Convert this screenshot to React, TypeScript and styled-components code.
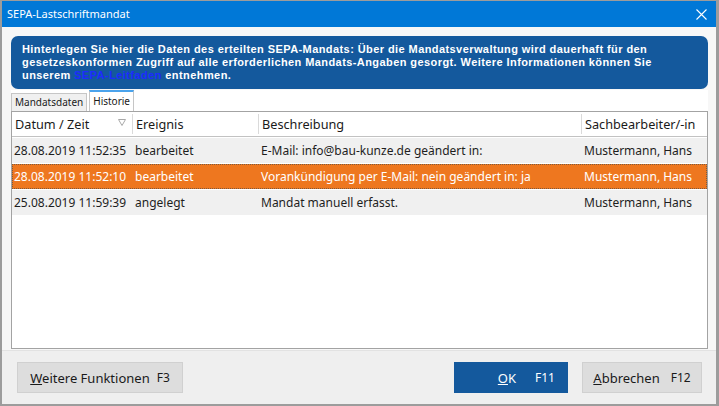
import React from "react";
import styled, { createGlobalStyle, css } from "styled-components";

interface IHistoryEntry {
    date: string;
    event: string;
    description: string;
    clerk: string;
}

const entries: IHistoryEntry[] = [
    {
        date: "28.08.2019 11:52:35",
        event: "bearbeitet",
        description: "E-Mail: info@bau-kunze.de geändert in:",
        clerk: "Mustermann, Hans",
    },
    {
        date: "28.08.2019 11:52:10",
        event: "bearbeitet",
        description: "Vorankündigung per E-Mail: nein geändert in: ja",
        clerk: "Mustermann, Hans",
    },
    {
        date: "25.08.2019 11:59:39",
        event: "angelegt",
        description: "Mandat manuell erfasst.",
        clerk: "Mustermann, Hans",
    },
];

const columns = ["Datum / Zeit", "Ereignis", "Beschreibung", "Sachbearbeiter/-in"];

const App: React.FC = () => {
    const selected = 1;
    return (
        <>
            <GlobalStyle />
            <Window>
                <TitleBar>
                    <Title>SEPA-Lastschriftmandat</Title>
                    <CloseButton>
                        <svg width="11" height="11" viewBox="0 0 11 11">
                            <path d="M0.5 0.5 L10.5 10.5 M10.5 0.5 L0.5 10.5" stroke="#fff" strokeWidth="1.1" />
                        </svg>
                    </CloseButton>
                </TitleBar>

                <Body>
                    <InfoBox>
                        <InfoLine>
                            Hinterlegen Sie hier die Daten des erteilten SEPA-Mandats: Über die Mandatsverwaltung wird dauerhaft für den
                        </InfoLine>
                        <InfoLine>
                            gesetzeskonformen Zugriff auf alle erforderlichen Mandats-Angaben gesorgt. Weitere Informationen können Sie
                        </InfoLine>
                        <InfoLine>
                            unserem <InfoLink>SEPA-Leitfaden</InfoLink> entnehmen.
                        </InfoLine>
                    </InfoBox>

                    <TabStrip>
                        <Tab>Mandatsdaten</Tab>
                        <Tab $active>Historie</Tab>
                    </TabStrip>

                    <List>
                        <HeaderRow>
                            {columns.map((col, i) => (
                                <HeaderCell key={i} $last={i === columns.length - 1}>
                                    {col}
                                    {i === 0 && (
                                        <SortMark width="8" height="7" viewBox="0 0 8 7">
                                            <path d="M0.5 0.5 H7.5 L4 6.5 Z" fill="none" stroke="#a8a8a8" strokeWidth="1" />
                                        </SortMark>
                                    )}
                                </HeaderCell>
                            ))}
                        </HeaderRow>
                        {entries.map((item, i) => (
                            <Row key={i} $selected={i === selected}>
                                <Cell>{item.date}</Cell>
                                <Cell>{item.event}</Cell>
                                <Cell>{item.description}</Cell>
                                <Cell>{item.clerk}</Cell>
                            </Row>
                        ))}
                    </List>
                </Body>

                <Footer>
                    <Button $width={166} $gap={7}>
                        <span>
                            <u>W</u>eitere Funktionen
                        </span>
                        <Shortcut>F3</Shortcut>
                    </Button>
                    <Spacer />
                    <Button $primary $width={114} $gap={19}>
                        <span>
                            <u>O</u>K
                        </span>
                        <Shortcut>F11</Shortcut>
                    </Button>
                    <Button $width={120} $gap={11}>
                        <span>
                            <u>A</u>bbrechen
                        </span>
                        <Shortcut>F12</Shortcut>
                    </Button>
                </Footer>
            </Window>
        </>
    );
};

const GlobalStyle = createGlobalStyle`
    html, body {
        margin: 0;
        padding: 0;
        background: #ffffff;
    }
    body {
        font-family: "Noto Sans", "Open Sans", sans-serif;
    }
`;

const Window = styled.div`
    box-sizing: border-box;
    width: 719px;
    height: 406px;
    display: flex;
    flex-direction: column;
    border-style: solid;
    border-color: #9c9c9c;
    border-width: 1px 3px 2px 2px;
    background: #f7f7f7;
`;

const TitleBar = styled.div`
    height: 26px;
    flex: none;
    display: flex;
    align-items: center;
    background: #0078d7;
    color: #ffffff;
    padding-left: 5px;
    padding-right: 9px;
`;

const Title = styled.div`
    flex: 1;
    font-size: 11px;
    margin-top: -1px;
`;

const CloseButton = styled.div`
    display: flex;
    align-items: center;
    margin-top: 1px;
`;

const Body = styled.div`
    flex: 1;
    display: flex;
    flex-direction: column;
    padding: 9px 8px 1px 9px;
    min-height: 0;
`;

const InfoBox = styled.div`
    box-sizing: border-box;
    height: 53px;
    flex: none;
    background: #14599d;
    border-radius: 7px;
    padding: 7px 11px 6px;
    color: #ffffff;
    font-family: "Liberation Sans", Arial, sans-serif;
    font-size: 11px;
    font-weight: 700;
    letter-spacing: 0.42px;
    white-space: nowrap;
`;

const InfoLine = styled.div`
    height: 13px;
    line-height: 13px;
`;

const InfoLink = styled.span`
    color: #1d2bff;
`;

const TabStrip = styled.div`
    height: 21px;
    margin-top: 1px;
    flex: none;
    display: flex;
    align-items: flex-end;
    gap: 2px;
    background: #ffffff;
`;

const Tab = styled.div<{ $active?: boolean }>`
    box-sizing: border-box;
    height: 18px;
    padding: 0 3px;
    font-size: 10px;
    line-height: 17px;
    color: #1a1a1a;
    background: #f0f0f0;
    border: 1px solid #c6c6c6;
    border-bottom: none;
    ${(p) =>
        p.$active &&
        css`
            height: 21px;
            background: #ffffff;
            border-top: 2px solid #4aa3ec;
            line-height: 18px;
        `}
`;

const List = styled.div`
    flex: 1;
    border: 1px solid #a3a3a3;
    background: #ffffff;
    display: flex;
    flex-direction: column;
    gap: 1px;
`;

const grid = css`
    display: grid;
    grid-template-columns: 121px 126px 323px 1fr;
    align-items: center;
`;

const HeaderRow = styled.div`
    ${grid}
    height: 24px;
    border-bottom: 1px solid #c2c2c2;
    background: #ffffff;
`;

const HeaderCell = styled.div<{ $last?: boolean }>`
    position: relative;
    height: 20px;
    line-height: 20px;
    padding-left: 3px;
    font-size: 12.7px;
    color: #1a1a1a;
    border-right: ${(p) => (p.$last ? "none" : "1px solid #dadada")};
`;

const SortMark = styled.svg`
    position: absolute;
    right: 6px;
    top: 5px;
`;

const Row = styled.div<{ $selected?: boolean }>`
    ${grid}
    box-sizing: border-box;
    height: 25px;
    background: ${(p) => (p.$selected ? "#ee771f" : "#f0f0f0")};
    color: ${(p) => (p.$selected ? "#ffffff" : "#1e1e1e")};
    border: 1px dotted ${(p) => (p.$selected ? "#7a5a40" : "transparent")};
`;

const Cell = styled.div`
    font-size: 12px;
    padding-left: 1px;
    white-space: nowrap;
    overflow: hidden;
`;

const Footer = styled.div`
    height: 54px;
    flex: none;
    box-sizing: border-box;
    display: flex;
    align-items: flex-start;
    gap: 14px;
    padding: 11px 14px 0 15px;
    background: #efefef;
    border-top: 1px solid #e2e2e2;
`;

const Spacer = styled.div`
    flex: 1;
`;

const Button = styled.div<{ $primary?: boolean; $width?: number; $gap?: number }>`
    box-sizing: border-box;
    height: 31px;
    width: ${(p) => (p.$width ? `${p.$width}px` : "auto")};
    padding: 0 12px;
    display: flex;
    align-items: center;
    justify-content: ${(p) => (p.$primary ? "flex-end" : "center")};
    gap: ${(p) => p.$gap ?? 9}px;
    font-size: 13px;
    background: ${(p) => (p.$primary ? "#14599d" : "#dddddd")};
    color: ${(p) => (p.$primary ? "#ffffff" : "#1a1a1a")};
    border: 1px solid ${(p) => (p.$primary ? "#14599d" : "#d0d0d0")};
`;

const Shortcut = styled.span`
    font-size: 12px;
`;

export default App;
